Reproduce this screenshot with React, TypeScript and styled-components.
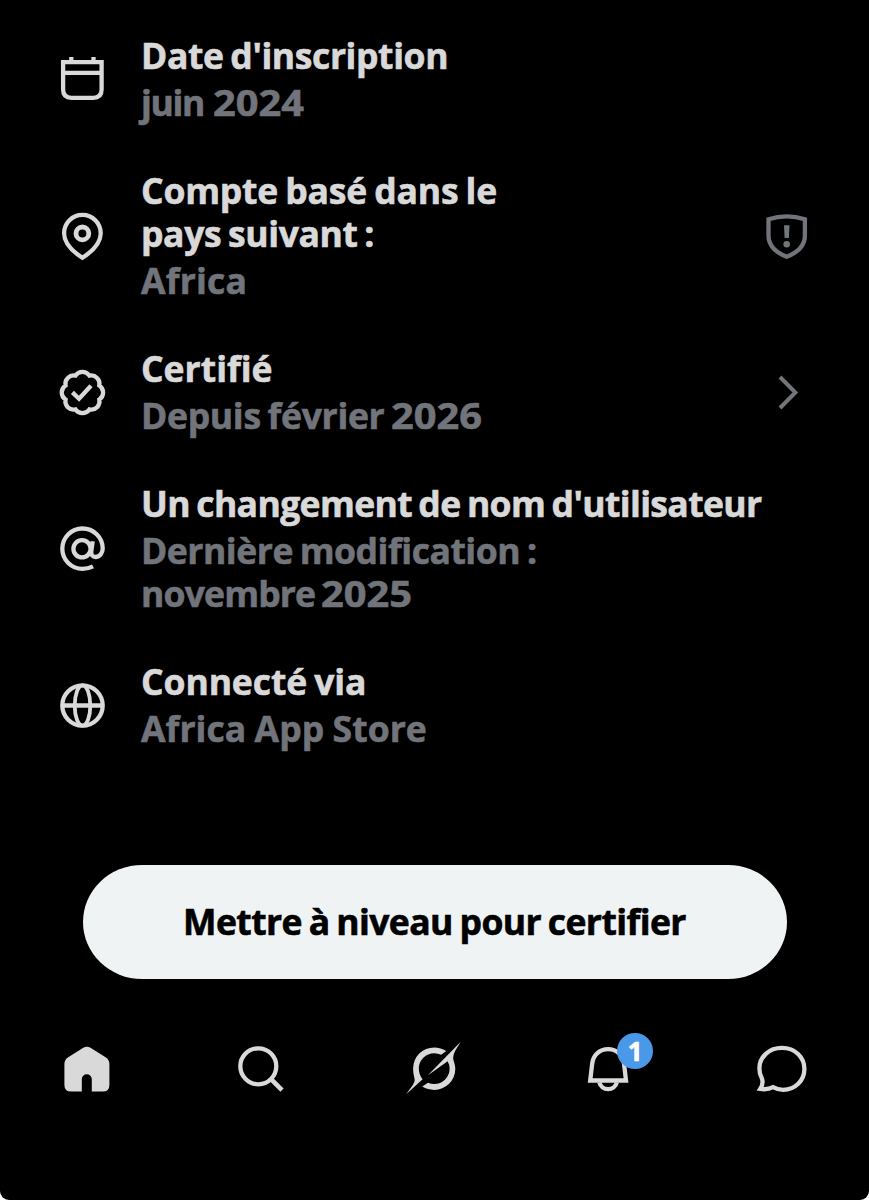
import React from "react";
import styled, { createGlobalStyle } from "styled-components";

const GlobalStyle = createGlobalStyle`
  * { box-sizing: border-box; }
  html, body { margin: 0; background: #fff; }
`;

const ink = "#d9d9d9";
const muted = "#71747a";

const Screen = styled.main`
  width: 869px;
  height: 1200px;
  padding-top: 34px;
  display: flex;
  flex-direction: column;
  overflow: hidden;
  background: #000;
  border-radius: 0 0 9px 9px;
  font-family: "Open Sans", "Noto Sans", sans-serif;
  font-weight: 700;
  font-variant-ligatures: none;
  -webkit-text-stroke: 0.6px currentColor;
`;

const List = styled.ul`
  list-style: none;
  margin: 0;
  padding: 0 58px;
  display: flex;
  flex-direction: column;
  gap: 45px;
`;

const Row = styled.li`
  display: flex;
  align-items: center;
`;

const Copy = styled.div`
  flex: 1;
  margin-left: 34px;
  display: flex;
  flex-direction: column;
  gap: 4px;
`;

const Paragraph = styled.div<{ $muted?: boolean }>`
  color: ${(p) => (p.$muted ? muted : ink)};
  font-size: 35.5px;
  line-height: 43px;
`;

const Line = styled.span<{ $track: number; $gap: number }>`
  display: block;
  height: 43px;
  white-space: pre;
  letter-spacing: ${(p) => p.$track}px;
  word-spacing: ${(p) => p.$gap}px;
`;

const Year = styled.span`
  display: inline-block;
  letter-spacing: 0;
  transform: scaleX(1.12);
  transform-origin: left;
`;

const Icon = styled.svg<{ $size: number; $color?: string }>`
  display: block;
  flex: none;
  width: ${(p) => p.$size}px;
  height: ${(p) => p.$size}px;
  overflow: visible;
  color: ${(p) => p.$color ?? ink};
  fill: none;
  stroke: currentColor;
  stroke-width: 4.3;
`;

const Upgrade = styled.button`
  width: 704px;
  height: 114px;
  margin: 115px auto 0;
  padding: 0 0 1px;
  border: 0;
  border-radius: 59px / 57px;
  background: #eff3f4;
  color: #000;
  font: inherit;
  font-size: 35.5px;
  line-height: 43px;
  letter-spacing: -0.57px;
  word-spacing: -2px;
  white-space: nowrap;
`;

const TabBar = styled.nav`
  margin-top: 60px;
  display: grid;
  grid-template-columns: repeat(5, 1fr);
  justify-items: center;
`;

const Tab = styled.a`
  position: relative;
  display: block;
`;

const Badge = styled.span`
  position: absolute;
  left: 39px;
  top: -6px;
  width: 36px;
  height: 36px;
  border-radius: 50%;
  background: #4a99e9;
  color: #fff;
  font-size: 26px;
  line-height: 36px;
  text-align: center;
`;

const Calendar = () => (
  <Icon $size={49} viewBox="0 0 49 49">
    <path d="M5.1 7.2H43.6V34.5Q43.6 42.8 35.3 42.8H13.4Q5.1 42.8 5.1 34.5Z" />
    <path d="M5 17.8H43.6M13.3 2v5M35.5 2v5" />
  </Icon>
);

const Pin = () => (
  <Icon $size={49} viewBox="0 0 49 49">
    <path d="M24.4 46.8C17.5 42.3 6.1 33.8 6.1 22.2A18.3 18.3 0 0 1 42.7 22.2C42.7 33.8 31.3 42.3 24.4 46.8Z" />
    <circle cx="24.4" cy="22.4" r="6.4" strokeWidth="4.8" />
  </Icon>
);

const Verified = () => (
  <Icon $size={49} viewBox="0 0 49 49">
    <g transform="translate(-.4 -.3) scale(2.07)" strokeWidth="2.05">
      <path d="M3.85 8.62a4 4 0 0 1 4.78-4.77 4 4 0 0 1 6.74 0 4 4 0 0 1 4.78 4.78 4 4 0 0 1 0 6.74 4 4 0 0 1-4.77 4.78 4 4 0 0 1-6.75 0 4 4 0 0 1-4.78-4.77 4 4 0 0 1 0-6.76Z" />
    </g>
    <path d="M14.4 24.4 21 30.7 33 17.8" />
  </Icon>
);

const At = () => (
  <Icon $size={49} viewBox="0 0 49 49">
    <circle cx="24" cy="24.8" r="8.6" />
    <path d="M34.7 17.2 33.3 27.2C32.8 31 34.6 33 37.6 33 41.7 33 44.7 29 44.7 24.5A20.2 20.2 0 1 0 24.5 44.9Q30.1 44.9 35 42.4" />
  </Icon>
);

const Globe = () => (
  <Icon $size={49} viewBox="0 0 49 49">
    <circle cx="24.5" cy="24.5" r="20.2" />
    <ellipse cx="24.5" cy="24.5" rx="7.8" ry="20.2" strokeWidth="3.8" />
    <path d="M4.3 24.5H44.7" />
  </Icon>
);

const Shield = () => (
  <Icon $size={49} $color={muted} viewBox="0 0 49 49">
    <path d="M6.5 8.3Q24.7 2.5 42.9 8.3V24.5C42.9 36 34.8 41.8 24.7 45.8 14.6 41.8 6.5 36 6.5 24.5Z" />
    <path d="M22 14.2H27.5L26.9 27H22.6Z" fill="currentColor" stroke="none" />
    <circle cx="24.7" cy="33.2" r="3.3" fill="currentColor" stroke="none" />
  </Icon>
);

const Chevron = () => (
  <Icon $size={49} $color={muted} viewBox="0 0 49 49">
    <path d="M18 9 33.4 24.5 18 40" strokeWidth="4" />
  </Icon>
);

const Home = () => (
  <Icon $size={60} viewBox="0 0 60 60">
    <path
      fill="currentColor"
      stroke="none"
      d="M26.3 8.8Q29.9 6.7 33.5 8.8L48.6 18.2Q52.4 20.7 52.4 25V46Q52.4 52.6 45.8 52.6H34.8V40.3A5 5 0 0 0 24.8 40.3V52.6H14Q7.4 52.6 7.4 46V25Q7.4 20.7 11.2 18.2Z"
    />
  </Icon>
);

const Search = () => (
  <Icon $size={60} viewBox="0 0 60 60">
    <circle cx="27.3" cy="27.3" r="18" />
    <path d="M39.8 39.8 51 51.2" strokeWidth="4.6" />
  </Icon>
);

const Orbit = () => (
  <Icon $size={60} viewBox="0 0 60 60">
    <g fill="currentColor" stroke="none">
      <path d="M2.2 55.3C5.6 50 9 47 10.4 42.8 11.4 40 9.1 36.5 9.1 29.6A21.1 21.1 0 0 1 30.2 8.4Q36.8 8.4 42.2 12L37.2 15.8Q34 14.2 30.2 14.2A15.4 15.4 0 0 0 14.8 29.6Q14.8 35.8 18.6 40.3Z" />
      <path d="M56.5 3C53.8 8.5 50 11.5 49.2 18.5 48.9 21.5 51.3 24.5 51.3 30A21 21 0 0 1 30.2 50.9Q23.7 50.9 18.2 47.6L24 43.8Q27 45.1 30.2 45.1A15.4 15.4 0 0 0 45.6 29.6Q45.6 25.6 43.6 22.3L23.6 36.5Z" />
    </g>
  </Icon>
);

const Bell = () => (
  <Icon $size={60} viewBox="0 0 60 60">
    <path d="M12.2 41.5 14.2 24.6C15.2 15.8 21.7 10.1 30.1 10.1S45 15.8 46 24.6L48 41.5Z" />
    <path d="M21.4 43.5C22.4 47.5 26 50.2 30.1 50.2S37.8 47.5 38.8 43.5" />
  </Icon>
);

const Chat = () => (
  <Icon $size={60} viewBox="0 0 60 60">
    <path d="M9.5 38.5C7.9 35.5 7.4 32.5 7.4 29.5 7.4 17.8 17 8.9 30 8.9 43 8.9 52.4 18 52.4 30 52.4 41.8 43 50.8 31.2 50.8 27.3 50.8 24 49.9 21 48.2 17 50.3 12.5 50.6 8.2 49.9 10.8 46 11.2 42 9.5 38.5Z" />
  </Icon>
);

type Text = { text: string; track?: number; gap?: number; year?: string };
type Entry = {
  icon: React.ReactNode;
  title: Text[];
  detail: Text[];
  action?: React.ReactNode;
};

const entries: Entry[] = [
  {
    icon: <Calendar />,
    title: [{ text: "Date d'inscription", track: -0.4, gap: -2 }],
    detail: [{ text: "juin ", track: -1.3, gap: 0.5, year: "2024" }],
  },
  {
    icon: <Pin />,
    title: [
      { text: "Compte basé dans le", track: -0.2, gap: -1.8 },
      { text: "pays suivant :", track: -0.35, gap: -2.3 },
    ],
    detail: [{ text: "Africa", track: 0.2 }],
    action: <Shield />,
  },
  {
    icon: <Verified />,
    title: [{ text: "Certifié" }],
    detail: [{ text: "Depuis février ", track: -0.3, gap: -2.1, year: "2026" }],
    action: <Chevron />,
  },
  {
    icon: <At />,
    title: [{ text: "Un changement de nom d'utilisateur", track: -0.63, gap: -2.2 }],
    detail: [
      { text: "Dernière modification :", track: -0.46, gap: -2 },
      { text: "novembre ", track: -0.83, gap: -2.5, year: "2025" },
    ],
  },
  {
    icon: <Globe />,
    title: [{ text: "Connecté via", track: -0.1, gap: -2 }],
    detail: [{ text: "Africa App Store", track: 0.07, gap: -1 }],
  },
];

const Lines = ({ items }: { items: Text[] }) => (
  <>
    {items.map(({ text, track = 0, gap = 0, year }) => (
      <Line key={text} $track={track} $gap={gap}>
        {text}
        {year && <Year>{year}</Year>}
      </Line>
    ))}
  </>
);

export default function App() {
  return (
    <Screen>
      <GlobalStyle />
      <List>
        {entries.map((e) => (
          <Row key={e.title[0].text}>
            {e.icon}
            <Copy>
              <Paragraph><Lines items={e.title} /></Paragraph>
              <Paragraph $muted><Lines items={e.detail} /></Paragraph>
            </Copy>
            {e.action}
          </Row>
        ))}
      </List>
      <Upgrade>Mettre à niveau pour certifier</Upgrade>
      <TabBar>
        <Tab><Home /></Tab>
        <Tab><Search /></Tab>
        <Tab><Orbit /></Tab>
        <Tab><Bell /><Badge>1</Badge></Tab>
        <Tab><Chat /></Tab>
      </TabBar>
    </Screen>
  );
}
